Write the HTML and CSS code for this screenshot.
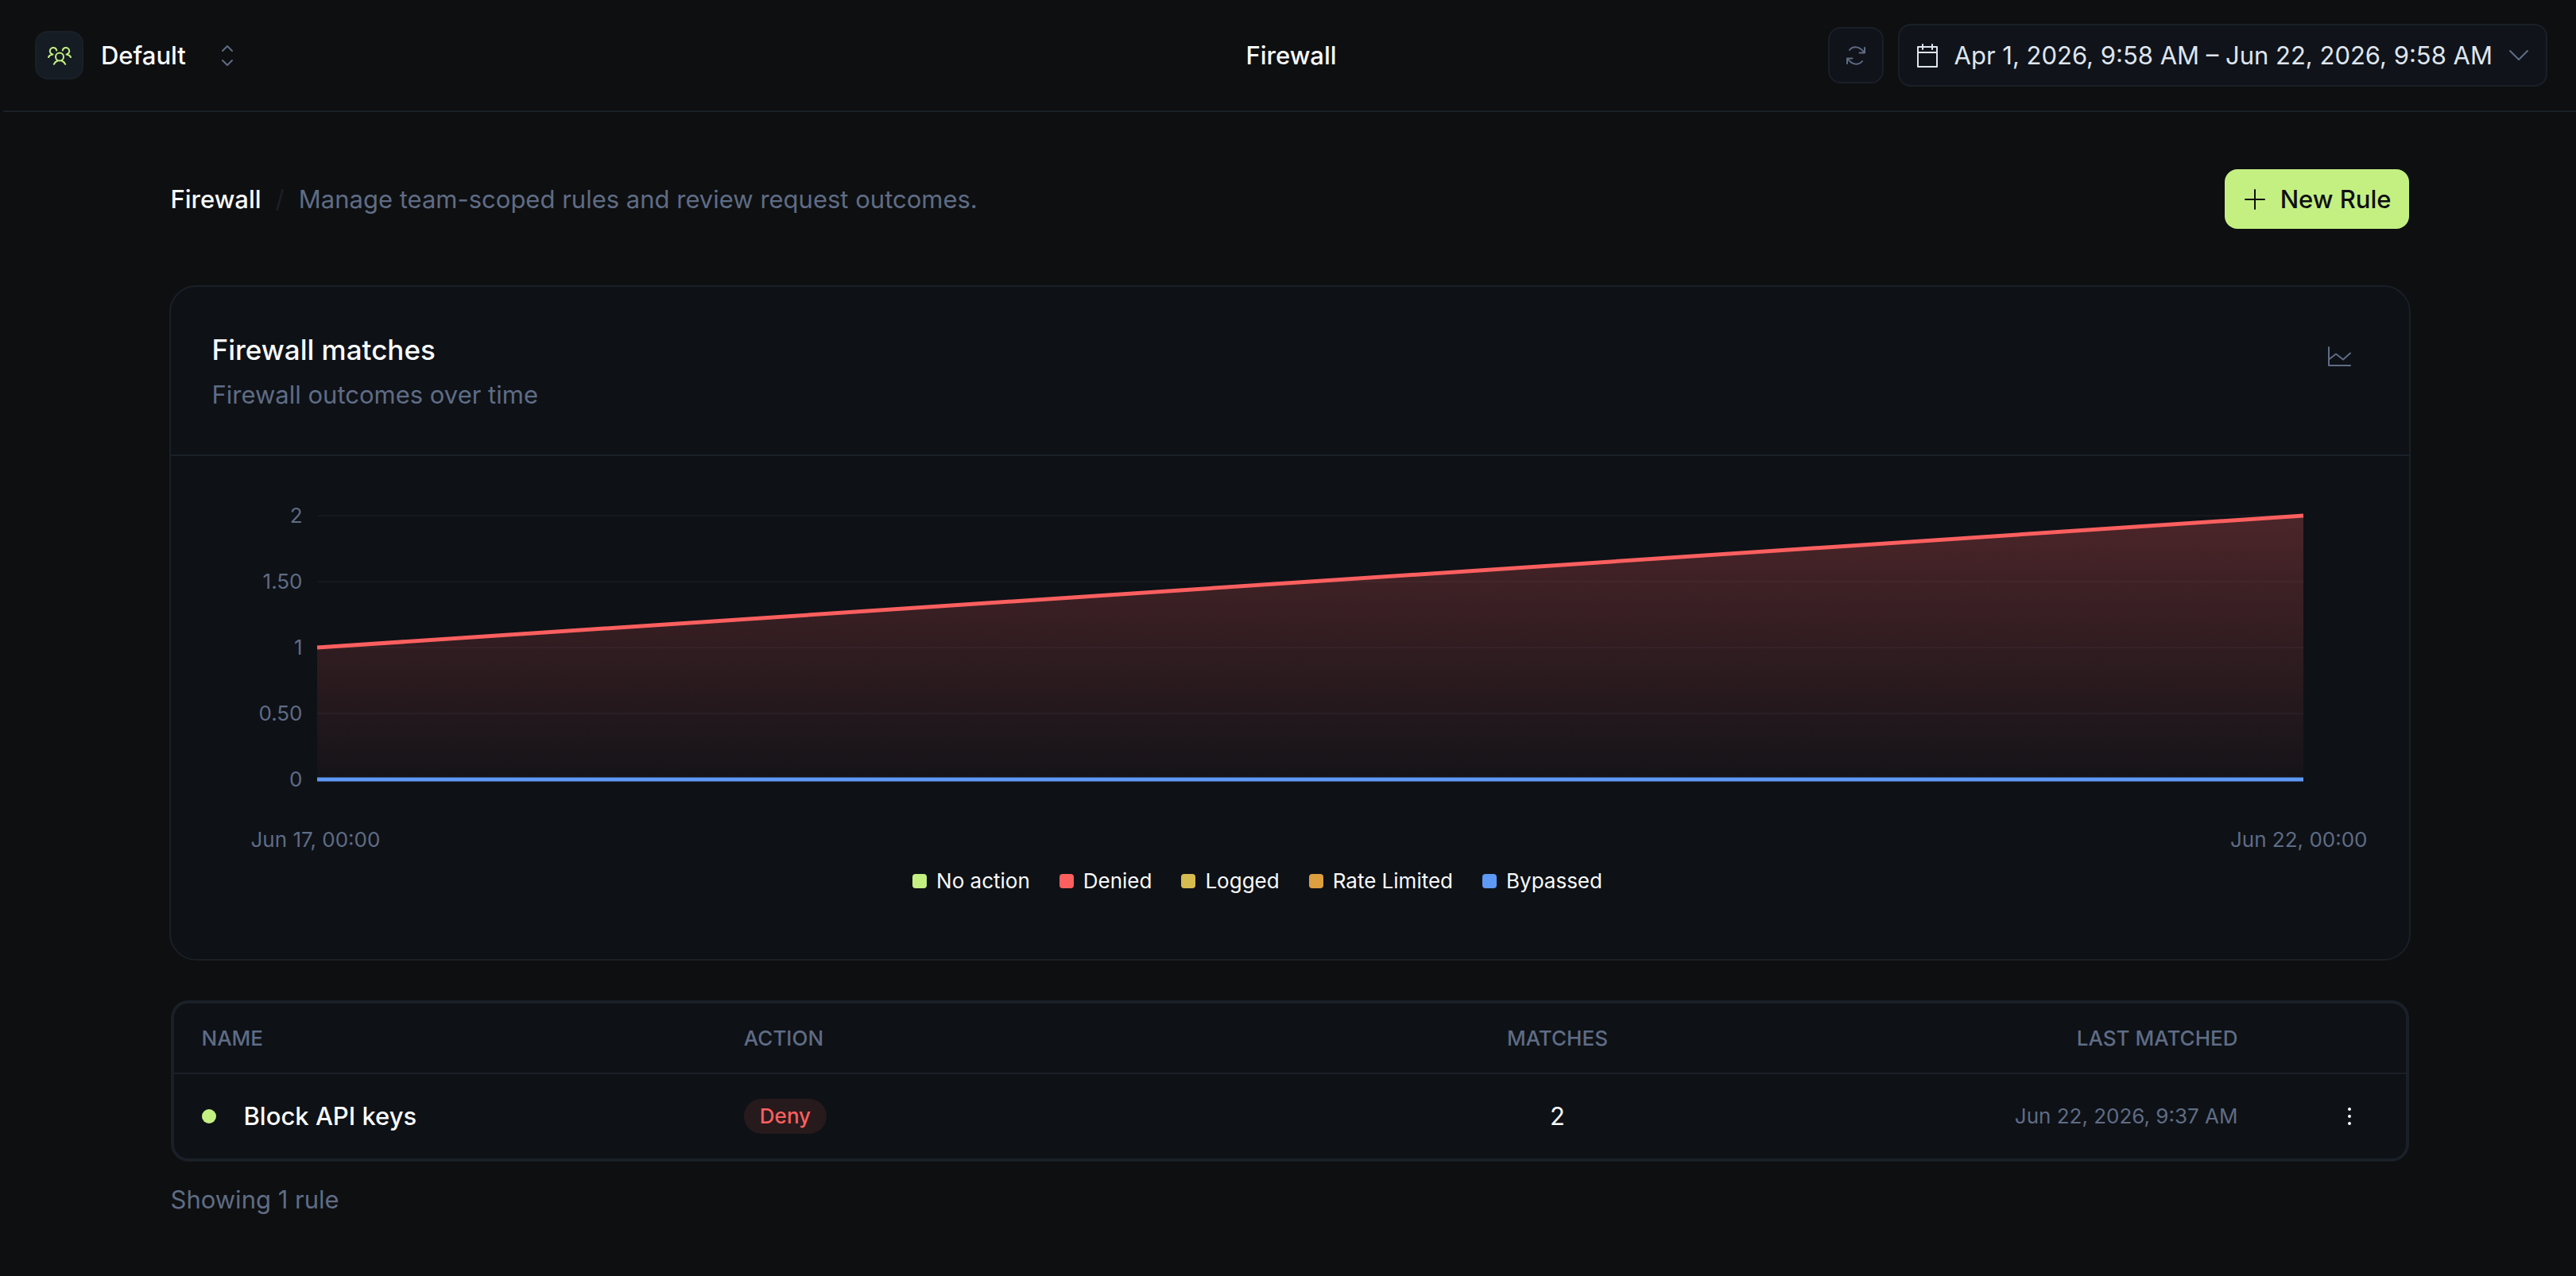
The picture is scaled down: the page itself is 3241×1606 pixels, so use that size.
FILE: index.html
```html
<!DOCTYPE html>
<html lang="en">
<head>
  <meta charset="UTF-8" />
  <meta name="viewport" content="width=device-width, initial-scale=1.0"/>
  <title>Firewall</title>
  <link rel="stylesheet" href="styles.css">
</head>
<body>
  <header class="topbar">
    <button type="button" class="team-switcher">
      <span class="team-badge">
        <svg class="icon" width="32" height="32" viewBox="0 0 32 32">
          <circle cx="16" cy="17.500" r="5"/>
          <path d="M8.800 26.800c1-2.300 2.500-3.600 4.700-4.300M23.200 26.800c-1-2.300-2.500-3.600-4.700-4.300M2 18c1-2 2.800-3.200 5.500-3.400M30 18c-1-2-2.800-3.200-5.500-3.400M6 14a4.300 4.300 0 1 1 6.300-4.500M26 14a4.300 4.300 0 1 0-6.300-4.500"/>
        </svg>
      </span>
      <span>Default</span>
      <svg class="icon muted chevrons" width="16" height="28" viewBox="0 0 16 28">
        <path d="M2 8l6-6 6 6M2 20l6 6 6-6"/>
      </svg>
    </button>

    <h1 class="topbar-title">Firewall</h1>

    <div class="topbar-actions">
      <button type="button" class="icon-btn" aria-label="Refresh">
        <svg class="icon muted" width="28" height="28" viewBox="0 0 28 28">
          <path d="M6 7C10 2 18 1.500 24 9.500M25 4v6.500h-6.500M22 21C18 26 10 26.500 4 18.500M3 24v-6.500h6.500"/>
        </svg>
      </button>
      <button type="button" class="date-btn">
        <svg class="icon" width="30" height="32" viewBox="0 0 30 32">
          <path d="M3 5h24v25H3zM3 12h24M9 2v6M21 2v6"/>
        </svg>
        <span>Apr 1, 2026, 9:58 AM – Jun 22, 2026, 9:58 AM</span>
        <svg class="icon muted" width="28" height="16" viewBox="0 0 28 16">
          <path d="M3 2l11 11L25 2"/>
        </svg>
      </button>
    </div>
  </header>

  <main class="content">
    <div class="page-head">
      <div class="breadcrumb">
        <h2>Firewall</h2>
        <span class="slash">/</span>
        <p>Manage team-scoped rules and review request outcomes.</p>
      </div>
      <button type="button" class="new-rule">
        <svg class="icon" width="28" height="28" viewBox="0 0 28 28">
          <path d="M14 2v24M2 14h24"/>
        </svg>
        New Rule
      </button>
    </div>

    <section class="card">
      <div class="card-head">
        <div>
          <h3>Firewall matches</h3>
          <p>Firewall outcomes over time</p>
        </div>
        <button type="button" class="chart-type" aria-label="Chart type">
          <svg class="icon muted" width="32" height="28" viewBox="0 0 32 28">
            <path d="M3 2v23h27M3 17.500l9-7 9 7 9-8"/>
          </svg>
        </button>
      </div>

      <div class="chart">
        <div class="chart-plot">
          <div class="y-axis">
            <span>2</span>
            <span>1.50</span>
            <span>1</span>
            <span>0.50</span>
            <span>0</span>
          </div>
          <svg class="plot" viewBox="0 0 100 332" preserveAspectRatio="none">
            <defs>
              <linearGradient id="denied" x1="0" y1="0" x2="0" y2="1">
                <stop offset="0" stop-color="#fb5f5f" stop-opacity="0.26"/>
                <stop offset="1" stop-color="#fb5f5f" stop-opacity="0.03"/>
              </linearGradient>
            </defs>
            <path class="grid" d="M0 0H100M0 83H100M0 166H100M0 249H100M0 332H100"/>
            <path d="M0 166L100 0V332H0z" fill="url(#denied)"/>
            <path class="line line-denied" d="M0 166L100 0"/>
            <path class="line line-bypassed" d="M0 332H100"/>
          </svg>
        </div>
        <div class="x-axis">
          <span>Jun 17, 00:00</span>
          <span>Jun 22, 00:00</span>
        </div>
        <ul class="legend">
          <li><i class="swatch no-action"></i>No action</li>
          <li><i class="swatch denied"></i>Denied</li>
          <li><i class="swatch logged"></i>Logged</li>
          <li><i class="swatch rate-limited"></i>Rate Limited</li>
          <li><i class="swatch bypassed"></i>Bypassed</li>
        </ul>
      </div>
    </section>

    <div class="table-wrap">
      <table>
        <thead>
          <tr>
            <th class="col-name">Name</th>
            <th class="col-action">Action</th>
            <th class="col-matches">Matches</th>
            <th class="col-last">Last matched</th>
            <th class="col-menu"></th>
          </tr>
        </thead>
        <tbody>
          <tr>
            <td>
              <div class="rule-name"><i class="dot"></i>Block API keys</div>
            </td>
            <td><span class="pill">Deny</span></td>
            <td class="col-matches">2</td>
            <td class="col-last">Jun 22, 2026, 9:37 AM</td>
            <td class="col-menu">
              <button type="button" class="menu-btn" aria-label="Rule options">
                <svg width="8" height="24" viewBox="0 0 8 24">
                  <circle cx="4" cy="3" r="2"/>
                  <circle cx="4" cy="12" r="2"/>
                  <circle cx="4" cy="21" r="2"/>
                </svg>
              </button>
            </td>
          </tr>
        </tbody>
      </table>
    </div>

    <p class="table-note">Showing 1 rule</p>
  </main>
</body>
</html>
```

FILE: styles.css
```css
* {
  box-sizing: border-box;
}

body {
  margin: 0;
  padding-left: 4px;
  background: #0e0f11;
  color: #f8fafc;
  font-family: Inter, "Liberation Sans", sans-serif;
  font-size: 31px;
  line-height: 40px;
}

h1, h2, h3, p, ul {
  margin: 0;
  padding: 0;
  font-size: inherit;
  font-weight: 400;
}

button {
  display: flex;
  align-items: center;
  padding: 0;
  border: none;
  background: none;
  color: inherit;
  font: inherit;
  cursor: pointer;
}

.icon {
  flex: none;
  fill: none;
  stroke: currentColor;
  stroke-width: 2;
  stroke-linecap: round;
  stroke-linejoin: round;
}

.muted {
  color: #5f6c85;
}

/* top bar */
.topbar {
  display: grid;
  grid-template-columns: 1fr auto 1fr;
  align-items: center;
  height: 141px;
  padding: 0 36px 0 40px;
  border-bottom: 2px solid #1a2027;
}

.team-switcher {
  justify-self: start;
  gap: 22px;
  font-weight: 500;
}

.team-badge {
  display: flex;
  align-items: center;
  justify-content: center;
  width: 61px;
  height: 61px;
  border: 2px solid #1a2027;
  border-radius: 16px;
  background: #151c24;
  color: #c4f082;
}

.chevrons {
  margin-left: 22px;
}

.topbar-title {
  font-weight: 500;
}

.topbar-actions {
  display: flex;
  align-items: center;
  justify-content: flex-end;
  gap: 18px;
}

.icon-btn,
.date-btn {
  border: 2px solid #1a2027;
  border-radius: 16px;
  background: #10131a;
}

.icon-btn {
  justify-content: center;
  width: 70px;
  height: 71px;
}

.date-btn {
  gap: 19px;
  height: 79px;
  padding: 0 20px;
  color: #dfe5ee;
  white-space: nowrap;
}

/* page */
.content {
  max-width: 2816px;
  margin: 0 auto;
  padding: 72px 0;
}

.page-head {
  display: flex;
  align-items: center;
  justify-content: space-between;
  margin-bottom: 71px;
}

.breadcrumb {
  display: flex;
  gap: 18px;
}

.breadcrumb h2 {
  font-weight: 500;
}

.breadcrumb p {
  color: #5f6c85;
}

.slash {
  color: #1a2027;
}

.new-rule {
  gap: 18px;
  height: 75px;
  padding: 0 22px 0 24px;
  border-radius: 16px;
  background: #c4f082;
  color: #0e0f11;
  font-weight: 500;
}

.card {
  margin: 0 -2px 50px;
  border: 2px solid #1a2027;
  border-radius: 34px;
  background: #0e1116;
}

.card-head {
  display: flex;
  align-items: flex-start;
  justify-content: space-between;
  padding: 55px 52px 51px;
  border-bottom: 2px solid #1a2027;
}

.card-head h3 {
  margin-bottom: 9px;
  font-size: 35px;
  font-weight: 500;
  line-height: 48px;
}

.card-head p {
  color: #5f6c85;
  line-height: 48px;
}

.chart-type {
  justify-content: center;
  width: 72px;
  height: 66px;
}

/* chart */
.chart {
  padding: 75px 52px 82px;
  font-size: 26px;
  line-height: 32px;
}

.chart-plot {
  display: grid;
  grid-template-columns: 132px 1fr;
  height: 332px;
  margin-right: 81px;
}

.y-axis {
  display: flex;
  flex-direction: column;
  justify-content: space-between;
  margin: -16px 0;
  padding-right: 18px;
  color: #5f6c85;
  text-align: right;
}

.plot {
  width: 100%;
  height: 332px;
  overflow: visible;
}

.plot path {
  vector-effect: non-scaling-stroke;
}

.grid {
  stroke: #ffffff;
  stroke-opacity: 0.03;
  stroke-width: 2;
}

.line {
  fill: none;
  stroke-width: 5;
}

.line-denied {
  stroke: #fb5f5f;
}

.line-bypassed {
  stroke: #5e99f5;
}

.x-axis {
  display: flex;
  justify-content: space-between;
  margin-top: 60px;
  padding-left: 49px;
  color: #5f6c85;
}

.legend {
  display: flex;
  justify-content: center;
  gap: 37px;
  margin: 20px 81px 0 0;
  list-style: none;
}

.legend li {
  display: flex;
  align-items: center;
  gap: 12px;
}

.swatch {
  width: 18px;
  height: 18px;
  border-radius: 4px;
}

.no-action { background: #c4f082; }
.denied { background: #fb5f5f; }
.logged { background: #d6bb50; }
.rate-limited { background: #dd9f3f; }
.bypassed { background: #5e99f5; }

/* rules table */
.table-wrap {
  border: 4px solid #1a2027;
  border-radius: 22px;
  background: #0e1116;
}

table {
  width: 100%;
  border-collapse: collapse;
  table-layout: fixed;
}

th,
td {
  padding: 0 35px;
  text-align: left;
}

th {
  height: 88px;
  border-bottom: 2px solid #1a2027;
  color: #5f6c85;
  font-size: 26px;
  font-weight: 500;
  text-transform: uppercase;
}

td {
  height: 107px;
}

.col-name,
.col-action {
  width: 24.3%;
}

.col-matches {
  width: 26.8%;
  text-align: center;
}

.col-last {
  text-align: right;
}

td.col-last {
  color: #5f6c85;
  font-size: 26px;
}

.col-menu {
  width: 176px;
  padding-right: 0;
}

.rule-name {
  display: flex;
  align-items: center;
  gap: 35px;
  font-weight: 500;
}

.dot {
  width: 18px;
  height: 18px;
  border-radius: 50%;
  background: #c4f082;
}

.pill {
  display: inline-block;
  padding: 0 20px;
  border-radius: 22px;
  background: #271a1c;
  color: #fb5f5f;
  font-size: 26px;
  font-weight: 500;
  line-height: 44px;
}

.menu-btn {
  justify-content: center;
  width: 100%;
  height: 64px;
}

.menu-btn svg {
  fill: #f8fafc;
}

.table-note {
  margin-top: 28px;
  color: #5f6c85;
}
```
